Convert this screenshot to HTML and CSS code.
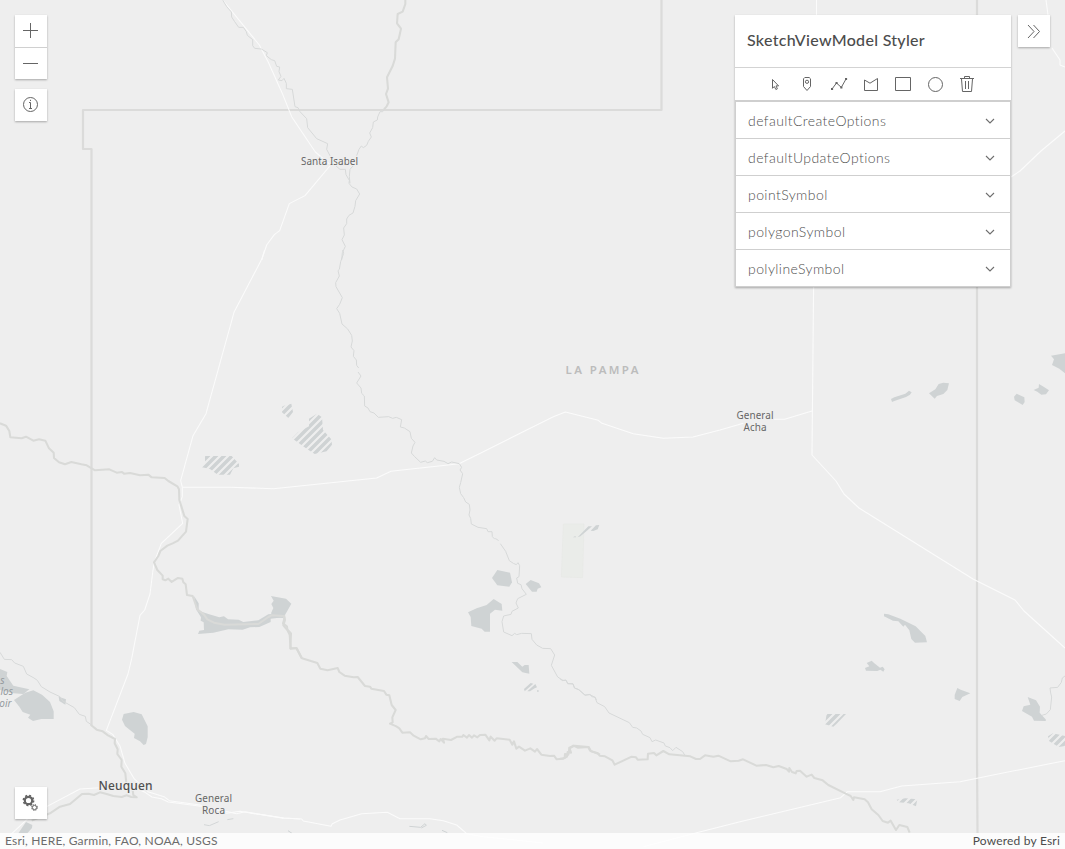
FILE: index.html
```html
<!DOCTYPE html>
<html lang="en">
<head>
<meta charset="utf-8">
<title>SketchViewModel Styler</title>
<link rel="stylesheet" href="styles.css">
</head>
<body>
<div class="app">
  <svg class="map" viewBox="0 0 1065 849" aria-label="Map of La Pampa">
    <defs>
      <pattern id="hatch" width="24" height="24" patternUnits="userSpaceOnUse">
        <path d="M-6 6L6 -6M-6 30L30 -6M18 30L30 18" stroke="#cfd3d4" stroke-width="10.500"/>
      </pattern>
    </defs>

    <!-- park -->
    <g transform="translate(430 450) scale(.33333)"><path d="M400 222H462L458 383L394 381Z" fill="#eaece9" stroke="#e7e9e6" stroke-width="2"/></g>

    <!-- lakes -->
    <g class="water">
      <g transform="translate(150 250) scale(.33333)" fill="url(#hatch)">
        <path d="M396 470L408 466L424 461L429 486L415 504L396 487Z"/>
        <path d="M477 506L501 491L516 502L519 540L544 568L546 584L530 604L494 612L470 596L426 565L444 547L477 529Z"/>
        <path d="M165 618H245L267 642V650L250 655L240 674H203L180 657L153 651L165 640Z"/>
      </g>
      <g transform="translate(0 400) scale(.33333)">
        <path d="M813 588L858 596L874 611L850 654L822 652L813 640L820 624L814 612L821 602Z"/>
        <path d="M582 588L596 610V632L625 642L658 652L672 649L684 658L716 659L730 666L775 661L805 643L850 640L849 652L812 656L812 666L778 681L750 682L728 689L685 688L640 698L594 702L598 692L612 690L611 667L602 662L603 652L588 628Z"/>
      </g>
      <g transform="translate(0 620) scale(.33333)">
        <path d="M0 147L22 156L20 168L40 197L88 208L70 222L40 220L0 210Z"/>
        <path d="M42 240L76 218L100 211L126 224L150 246L161 274V297H124L99 303L84 293L91 284L68 276L58 260Z"/>
        <path d="M176 230L198 238L196 254L178 243Z"/>
        <path d="M371 282L401 276L425 283L443 319V352L438 372L431 375L420 364L402 354L404 341L385 326L375 318L366 299Z"/>
        <path d="M55 640L78 606L97 615L96 624L82 640Z"/>
        <path d="M612 614L628 617L656 605M682 599L700 596" fill="none" stroke="#d3d6d7" stroke-width="3"/>
      </g>
      <g transform="translate(250 560) scale(.33333)">
        <path d="M742 30L780 38L786 67L778 80L742 76L726 54Z"/>
        <path d="M827 72L842 60L867 70L874 82L863 86L860 95H846Z"/>
        <path d="M731 117L755 132L757 152L735 149L720 161V215H704L695 206L664 198L662 171L654 157L680 145L710 135Z"/>
        <path d="M785 306H802L817 320L824 315H836L838 341L817 337Z"/>
        <path d="M822 387L842 369L850 371L824 394ZM832 394L856 372L861 382L854 385L840 394ZM861 391H866V395H861Z"/>
        <path d="M478 799L512 802L525 791L529 796L514 804M576 811L592 818M114 812L126 820" fill="none" stroke="#cfd3d4" stroke-width="3"/>
      </g>
      <g transform="translate(430 450) scale(.33333)"><path d="M429 262L436 258L438 262ZM443 262L475 229H486L470 243L451 259ZM482 242L498 226L508 225L503 238L490 243Z"/></g>
      <g transform="translate(780 580) scale(.33333)">
        <path d="M312 101L325 103L361 116L407 139L436 168L441 187L405 188L394 177L388 151L375 134L370 140L355 124L339 122L312 109Z"/>
        <path d="M260 249L275 242L283 250L300 263L308 260L314 268L310 275L301 269L292 273L258 272L255 264L268 259Z"/>
        <path d="M532 324L542 329L571 340L547 351L539 363L524 357V345Z"/>
        <path d="M743 351L768 361L780 380L779 398L798 419L797 423L762 422L756 410L726 393L731 379L751 374Z"/>
        <g fill="url(#hatch)">
          <path d="M140 402H198L170 431L160 440L135 433Z"/>
          <path d="M350 659L376 655L412 658L408 679L386 670L357 667Z"/>
          <path d="M804 469L819 460L855 468V498L836 501L808 484Z"/>
        </g>
      </g>
      <g transform="translate(720 330) scale(.33333)">
        <path d="M513 207L523 202L556 191L567 182L575 187L570 194L558 201L523 213L516 216Z"/>
        <path d="M627 190L646 178L656 162L670 158L687 160L682 180L670 192L651 198L644 206Z"/>
        <path d="M882 200L890 191L913 202L914 216L908 225L884 211Z"/>
        <path d="M941 180L956 173L957 162L972 171L987 181L978 193L964 194L952 185Z"/>
        <path d="M993 77L1035 70V130L1018 116L996 105L1002 88Z"/>
      </g>
    </g>

    <!-- province boundaries -->
    <g class="boundary">
      <path d="M661.5 0V110H83V149H91.5V726"/>
      <path d="M977 0V755L977.5 833"/>
    </g>

    <!-- roads -->
    <g class="road">
      <g transform="translate(200 0) scale(.33333)"><path d="M68 0L178 135L205 187L246 278L275 350L346 456L392 495L315 587L268 611L239 692L223 704L200 735L185 780"/></g>
      <g transform="translate(150 250) scale(.33333)">
        <path d="M344 0L335 28L252 187L168 491L129 557L92 692L97 712V740L87 765L98 820L34 880L13 936L9 960L0 1032L-16 1080L-30 1096L-55 1226L-66 1272L-131 1441L-112 1453L-90 1488L-75 1540L-47 1587L-6 1625L42 1640L58 1652L150 1665L230 1690L270 1684L400 1705"/>
        <path d="M97 712H240L370 716L680 684L723 664L927 641L997 607L1100 555L1210 500L1246 486L1345 511L1356 520L1450 551L1540 565L1629 561L1710 540L1780 520M1870 508L1904 508L1986 483"/>
      </g>
      <path d="M816.500 0V16M813.600 286L812 455L836 481L844 494L859 508L973 579L1015 600L1024 611L1065 648"/>
      <path d="M1011 177L1020 171L1041 151L1065 131M1046 0L1048 15M1052 48L1060 60L1060 65L1065 67"/>
      <g transform="translate(0 620) scale(.33333)"><path d="M20 655L90 590L140 560L240 507L300 503L400 502L435 517L456 531L484 536L505 546L620 561L710 581L735 575L850 594L900 597"/></g>
      <g transform="translate(250 560) scale(.33333)"><path d="M0 759L100 774L155 777L160 783L243 799L247 791L270 780L335 761L412 757L450 776L540 776L580 782L620 795L650 821L700 830L880 849"/></g>
      <g transform="translate(560 640) scale(.33333)"><path d="M250 620L410 578L540 545L842 473L862 455H960L1025 438L1200 425L1340 397L1515 362"/></g>
    </g>

    <!-- minor streams -->
    <g class="stream">
      <g transform="translate(200 0) scale(.33333)">
        <path d="M68 0L80 20L94 36L95 51L104 65L116 82H130L139 95L142 106L158 119V137L164 145L184 147L202 158L199 167L214 179L224 182L230 199L239 201L237 215L243 229L235 240L246 242L252 235L259 250V266L277 268L281 294L285 320L294 323L300 335L320 356L323 383L350 416L383 431L380 448L390 467L401 482L408 498L420 508H436L438 524L448 541L447 550L456 561L470 567L479 582L467 602L465 619L459 639L447 646L440 657V671L431 684L433 705L426 719L436 739L427 758L425 780"/>
        <path d="M556 325L548 335H540L533 351L532 360L520 366L518 383L509 399L514 411L505 424L500 436L490 443L484 438L477 448L470 467M462 495L450 508L448 530L450 550"/>
      </g>
      <g transform="translate(150 250) scale(.33333)"><path d="M578 0L581 10L572 35L568 58L564 62L568 78L557 98L558 110L577 143L569 163L560 176L569 190L576 222L593 237L605 256L607 273L603 291L612 302L610 319L619 330L620 346L626 354M624 366L633 378L620 399L633 414L635 430L643 438L644 468L654 474L660 485L672 489L685 502L716 500L728 505L739 502L755 509L751 531L763 534L780 545L784 565L795 577L789 588L784 609L794 620L812 637L826 633L832 638L847 634L854 623L860 630L882 634L894 641L905 636L928 641L935 652L930 660L938 671L932 698L928 712L932 731L941 743L947 756L958 763L960 780L957 795L962 805L964 822L984 832L1010 836L1014 845L1026 845L1027 860L1035 868"/></g>
      <g transform="translate(430 450) scale(.33333)"><path d="M196 265L206 272M211 281L227 304L238 332L250 340L259 344L264 338L269 347L267 380L260 384L263 400L273 404L276 416L289 433L263 446L258 459L265 474L246 484L243 493L221 498L216 515L221 546L246 557L254 550L260 554L275 550L304 551L306 568L320 585L338 595L362 596L374 615L364 646L383 681L399 691L408 690L413 701L429 701L434 714L445 718L465 736L480 733L485 740L496 742L499 750"/></g>
      <g transform="translate(560 640) scale(.33333)"><path d="M0 116L6 122L18 121L24 131L39 132L43 144L58 150L75 165L90 164L105 172L111 188L134 200L147 219L208 248L218 262L230 264L243 273L248 283L270 293L276 305L287 300L312 309L316 318L330 323L338 332L348 322L368 335L374 345"/></g>
      <g transform="translate(0 620) scale(.33333)"><path d="M0 97L13 118L35 119L44 129L70 139L80 162L102 174L112 181L124 200L150 216L180 230L188 243L223 263L238 283L256 289L259 304L275 315"/></g>
      <g transform="translate(780 580) scale(.33333)"><path d="M855 288L847 294L844 307L833 322L810 324L812 339L815 351L811 389L799 402L786 406"/></g>
    </g>

    <!-- main rivers -->
    <g class="river">
      <g transform="translate(200 0) scale(.33333)"><path d="M616 0L616 12L608 35L593 42L591 70L603 86L596 118L587 127L585 176L578 198L561 232L564 266L558 282L566 307L560 319L552 328"/></g>
      <g transform="translate(0 400) scale(.33333)"><path d="M0 70L18 77L28 93L31 112L65 115L78 110L100 122L117 118L136 122L147 145L161 158L162 174L177 187L195 193L214 186L244 193L260 196L285 211L328 208L350 218L366 216L372 221L390 219L420 226L445 224L455 232L494 234L505 243L532 259L537 268L538 300L546 325L553 348L563 357L558 395L534 422L518 430L502 437L481 453L475 468L462 487L472 510L488 527L488 538L496 541L505 536L515 546L534 534L547 536L550 547L557 553L561 585L578 588L592 628L612 644L622 658L642 668L674 674L775 672L805 651L815 646L850 648L855 660L850 676L862 690L869 704L872 746L889 744L905 775"/></g>
      <g transform="translate(250 560) scale(.33333)"><path d="M102 165L104 174L99 190L111 200L112 208L123 220L121 265H140L156 295L202 309L211 326L233 331L263 324L268 336L284 347L311 352L323 351L345 378L360 380L364 386L402 393L409 404L418 406L425 435L437 450L427 472L428 487L420 491L439 499L448 505L457 518L480 517L491 527L512 538L525 535L528 528L536 537L557 536L568 544L572 537L582 548L579 536L603 540L622 530L637 530L640 525L651 533L657 525L666 533L672 526L682 532L690 525L706 524L718 541L722 530L734 542L740 535L779 539L787 554L792 544L799 566L807 560L825 572L841 565L855 575L861 567L874 584L900 588L912 587L920 598L940 596L951 590L953 576L963 578L958 563L974 557L1015 561L1020 572L1050 584"/></g>
      <g transform="translate(560 640) scale(.33333)"><path d="M0 356L14 354L15 342L25 344L28 326L40 317L53 323L86 321L93 334L114 340L119 347L135 349L157 361L164 374L215 350L228 352L233 359L263 358L264 341L282 339L289 346L310 333L328 343L391 349L408 357L420 357L435 346L460 350L475 347L512 364L536 362L549 358L570 368L589 377L618 375L640 382L656 378L680 387L687 395L688 384L696 396L707 400L710 393L720 392L740 410L755 404L763 414L788 421L805 435L857 461L872 468L880 480L882 472L914 478L924 487L935 508L955 525L968 543L984 548L992 542L1008 570L1018 555L1042 561L1049 578"/></g>
      <g transform="translate(0 620) scale(.33333)"><path d="M273 315L290 329L308 334L324 346L345 357L344 370L353 388L352 402L365 420L364 440L376 460L379 490L390 500L398 510L400 525L410 532L394 531L380 526L365 531L340 528L320 522L300 517L282 525L265 521L246 522L210 552L180 560L150 580L95 602"/></g>
    </g>

    <!-- place names -->
    <g class="label" text-anchor="middle">
      <text x="329.500" y="165" textLength="57">Santa Isabel</text>
      <text x="755" y="419" textLength="37">General</text>
      <text x="755" y="431" textLength="23">Acha</text>
      <text x="213.500" y="802" textLength="37">General</text>
      <text x="213.500" y="814" textLength="23">Roca</text>
      <text class="label-city" x="125.500" y="790" textLength="54">Neuquen</text>
      <text class="label-region" x="602" y="374" textLength="73">LA PAMPA</text>
    </g>
    <g class="label-water" text-anchor="end">
      <text x="4.500" y="683.500">s</text>
      <text x="13" y="695">los</text>
      <text x="11.500" y="706.500">oir</text>
    </g>
  </svg>

  <div class="ui">
    <div class="corners">
      <div class="stack">
        <div class="card zoom">
          <button class="tool" aria-label="Zoom in"><svg viewBox="0 0 32 32"><path d="M8 15.500H23M15.500 8V23"/></svg></button>
          <button class="tool" aria-label="Zoom out"><svg viewBox="0 0 32 32"><path d="M8 15.500H23"/></svg></button>
        </div>
        <button class="card tool" aria-label="Information"><svg viewBox="0 0 32 32"><circle cx="15.500" cy="15.500" r="7"/><path d="M14 13.500H15.500V19.500M14 19.500H17M15.500 10.800V12"/></svg></button>
      </div>
      <div class="side">
        <section class="card panel">
          <h1 class="title">SketchViewModel Styler</h1>
          <div class="toolbar">
            <button class="draw" aria-label="Select"><svg viewBox="0 0 32 32"><path d="M13.500 11.500V20.300L15.300 18.500L16.900 21.500L18.400 20.800L17 17.900H19.600Z"/></svg></button>
            <button class="draw" aria-label="Point"><svg viewBox="0 0 32 32"><path d="M13.800 9.500H18.200L19.500 10.800V18.500L16 22.500L12.500 18.500V10.800Z"/><circle cx="16" cy="13.800" r="1.600"/></svg></button>
            <button class="draw" aria-label="Polyline"><svg viewBox="0 0 32 32"><path d="M9 21L13.500 15L18.300 19.400L23 11"/><path d="M9 21h.1M13.500 15h.1M18.300 19.400h.1M23 11h.1" stroke-width="2" stroke-linecap="square"/></svg></button>
            <button class="draw" aria-label="Polygon"><svg viewBox="0 0 32 32"><path d="M9.500 12V22.500H22.500V10.500L15 15.200Z"/></svg></button>
            <button class="draw" aria-label="Rectangle"><svg viewBox="0 0 32 32"><path d="M8.500 9.500H23.500V22.500H8.500Z"/></svg></button>
            <button class="draw" aria-label="Circle"><svg viewBox="0 0 32 32"><circle cx="16.500" cy="16.500" r="7"/></svg></button>
            <button class="draw" aria-label="Delete"><svg viewBox="0 0 32 32"><path d="M9 10.500H23M13.500 10V8.500H18.500V10M10.500 11L11.500 23.500H20.500L21.500 11M14.500 13V21M17.500 13V21"/></svg></button>
          </div>
          <ul class="options">
            <li class="option">defaultCreateOptions<svg class="chevron" viewBox="0 0 10 6"><path d="M1 1L5 5L9 1"/></svg></li>
            <li class="option">defaultUpdateOptions<svg class="chevron" viewBox="0 0 10 6"><path d="M1 1L5 5L9 1"/></svg></li>
            <li class="option">pointSymbol<svg class="chevron" viewBox="0 0 10 6"><path d="M1 1L5 5L9 1"/></svg></li>
            <li class="option">polygonSymbol<svg class="chevron" viewBox="0 0 10 6"><path d="M1 1L5 5L9 1"/></svg></li>
            <li class="option">polylineSymbol<svg class="chevron" viewBox="0 0 10 6"><path d="M1 1L5 5L9 1"/></svg></li>
          </ul>
        </section>
        <button class="card tool" aria-label="Collapse"><svg viewBox="0 0 32 32"><path d="M10 10L16 16.500L10 23M15.500 10L21.500 16.500L15.500 23"/></svg></button>
      </div>
    </div>
    <div class="bottom">
      <button class="card tool" aria-label="Settings"><svg viewBox="0 0 32 32"><circle cx="13.500" cy="13.500" r="3.700" stroke-width="2.200"/><circle cx="13.500" cy="13.500" r="5.100" stroke-width="1.600" stroke-dasharray="2 2"/><circle cx="19.500" cy="20.500" r="2.100"/><circle cx="19.500" cy="20.500" r="3" stroke-width="1" stroke-dasharray="1.180 1.180"/></svg></button>
    </div>
    <footer class="attribution"><span class="sources">Esri, HERE, Garmin, FAO, NOAA, USGS</span><span class="powered">Powered by Esri</span></footer>
  </div>
</div>
</body>
</html>
```
FILE: styles.css
```css
* { box-sizing: border-box; }
body { margin: 0; font-family: Lato, "Open Sans", sans-serif; color: #4c4c4c; }
.app { position: relative; width: 1065px; height: 849px; overflow: hidden; background: #eee; }
.map { position: absolute; inset: 0; width: 100%; height: 100%; }
.water { fill: #cfd3d4; }
.boundary, .road, .stream, .river { fill: none; stroke-linejoin: round; }
.boundary { stroke: #dbdbda; stroke-width: 2.2; }
.road { stroke: #fbfbfb; }
.road > path { stroke-width: 1.1; }
.road g path { stroke-width: 3.1; }
.stream { stroke: #d7d9d9; stroke-width: 3; }
.river { stroke: #d9dad8; stroke-width: 6.2; }
.label { font: 10px "Noto Sans", sans-serif; fill: #666; stroke: #eee; stroke-width: 2px; paint-order: stroke; }
.label-city { font-size: 12px; font-weight: 500; fill: #505050; }
.label-region { font-size: 11.5px; font-weight: 600; fill: #bcbcbc; }
.label-water { font: italic 10px "Noto Sans", sans-serif; fill: #959b9e; }

.ui { position: relative; display: flex; flex-direction: column; height: 100%; }
.corners { flex: 1; display: flex; justify-content: space-between; align-items: flex-start; padding: 15px 15px 0; }
.stack { display: flex; flex-direction: column; gap: 10px; }
.card { background: #fff; box-shadow: 0 1px 2px rgba(0, 0, 0, .3); }
.zoom { height: 64px; }
.zoom .tool + .tool { height: 32px; border-top: 1px solid #d0d0d0; }
.tool, .draw { display: block; width: 32px; height: 32px; padding: 0; border: 0; overflow: hidden; }
.tool { background: #fff; }
.draw { background: none; }
.tool svg, .draw svg { display: block; width: 32px; height: 32px; fill: none; stroke: #656565; stroke-width: 1; }
.side { display: flex; align-items: flex-start; gap: 7px; }
.panel { width: 276px; }
.title { height: 53px; margin: 0; padding-left: 12px; border-bottom: 1px solid #d3d3d3; font-size: 16px; font-weight: 500; line-height: 50px; letter-spacing: .3px; }
.toolbar { display: flex; height: 32px; padding-left: 24px; }
.options { margin: 0; padding: 0; list-style: none; border: 1px solid #cfcfcf; border-top-width: 2px; border-bottom: 0; }
.option { display: flex; align-items: center; justify-content: space-between; height: 37px; padding: 1px 15px 0 12px; border-bottom: 1px solid #cfcfcf; font-size: 14px; font-weight: 300; color: #505050; letter-spacing: .42px; }
.chevron { width: 10px; height: 6px; fill: none; stroke: #6e6e6e; stroke-width: 1.1; }
.bottom { padding: 0 15px 14px; }
.attribution { display: flex; justify-content: space-between; height: 16px; padding: 0 5px; background: rgba(255, 255, 255, .8); font-size: 12px; line-height: 16px; }
.sources { color: #6c6c6c; letter-spacing: .19px; }
.powered { letter-spacing: .2px; }
```
